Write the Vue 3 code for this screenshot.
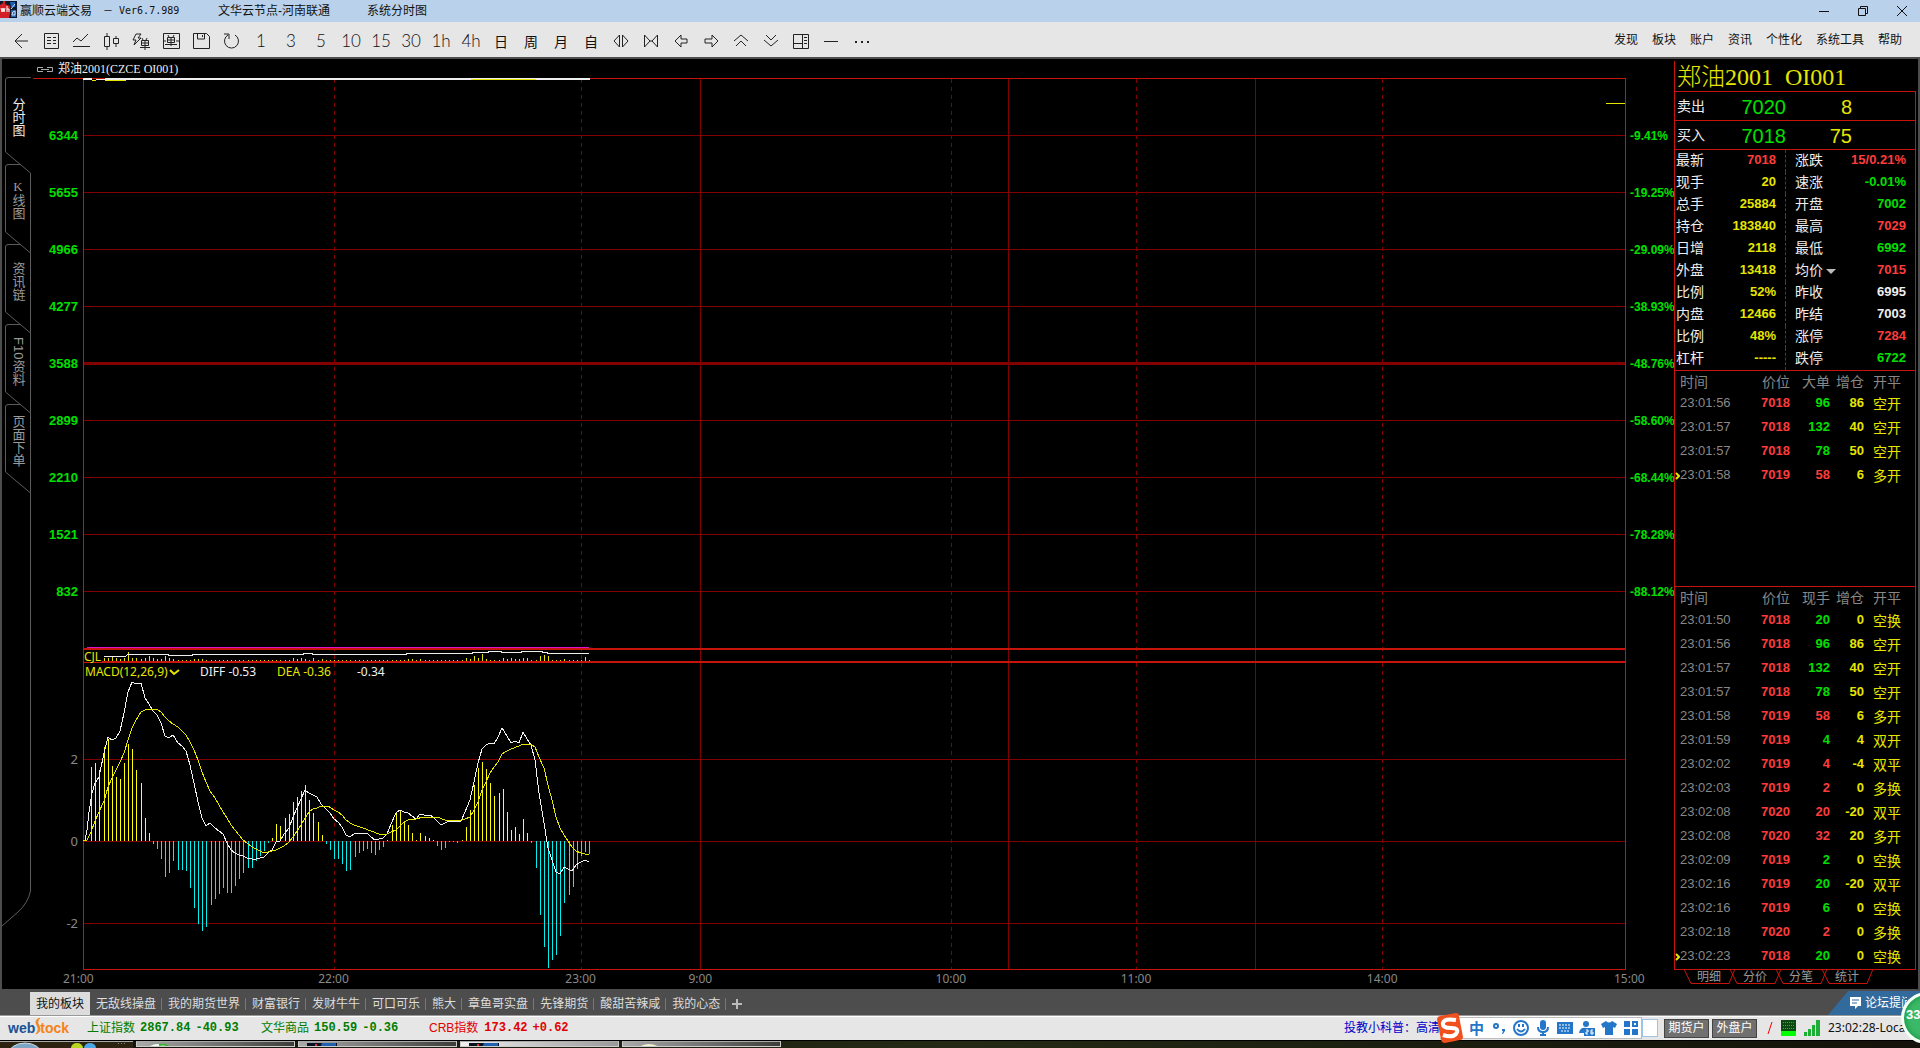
<script setup>
const periods = ['1', '3', '5', '10', '15', '30', '1h', '4h', '日', '周', '月', '自']
const menus = ['发现', '板块', '账户', '资讯', '个性化', '系统工具', '帮助']
const sideTabs = [
  { text: '分时图', active: true },
  { text: 'K线图', upright: true },
  { text: '资讯链' },
  { text: 'F10资料' },
  { text: '页面下单' }
]
const priceLabels = [6344, 5655, 4966, 4277, 3588, 2899, 2210, 1521, 832]
const pctLabels = ['-9.41%', '-19.25%', '-29.09%', '-38.93%', '-48.76%', '-58.60%', '-68.44%', '-78.28%', '-88.12%']
const times = ['21:00', '22:00', '23:00', '9:00', '10:00', '11:00', '14:00', '15:00']

const hLines = [57, 114, 171, 228, 342, 399, 456, 513, 681, 763, 845]
const solidTimes = [617, 925, 1172]
const dashedTimes = [251, 498, 868, 1053, 1299]

// MACD histogram, one value per minute, in chart pixels from the zero line
const macd = [
  74, 78, 71, 94, 102, 75, 64, 62, 78, 97, 92, 71, 58, 23, 8, -3, -8, -18, -36, -32, -20, -29, -29, -30, -47, -67,
  -83, -90, -86, -64, -58, -53, -47, -52, -52, -45, -38, -32, -27, -27, -20, -15, -10, -2, 3, 17, 15, 23, 27, 39,
  44, 50, 56, 41, 28, 19, 6, -3, -9, -18, -18, -23, -30, -29, -16, -12, -10, -8, -12, -14, -9, -6, 1, 16, 29, 31,
  20, 16, 8, 1, 8, 5, 3, 1, -5, -9, -7, -1, -1, -2, 1, 14, 31, 56, 73, 79, 72, 58, 45, 48, 52, 29, 11, 14, 7, 22,
  8, -2, -27, -74, -106, -127, -119, -114, -95, -62, -54, -46, -28, -15, -11, -13
]
const barX = k => 8 + Math.floor(k * 4.115 + 0.69)
const bars = macd.map((v, k) => ({ x: barX(k), y: v > 0 ? 763 - v : 763, h: Math.abs(v), up: v > 0 }))

const tall = { 3: 3, 4: 3, 5: 4, 6: 3, 7: 2, 8: 3, 9: 9, 10: 3, 11: 3, 12: 2, 13: 3, 14: 5, 15: 3, 16: 2, 17: 2, 18: 5, 19: 3, 20: 2, 25: 2, 26: 2, 27: 2, 49: 3, 50: 2, 51: 3, 52: 2, 54: 3, 56: 2, 77: 2, 78: 2, 80: 2, 91: 3, 92: 2, 93: 5, 94: 3, 95: 7, 96: 2, 100: 3, 101: 2, 102: 3, 103: 2, 104: 2, 105: 3, 106: 3, 109: 5, 110: 6, 111: 5, 115: 2, 120: 4 }
const volumes = macd.map((_, k) => ({ x: barX(k), h: tall[k] || 1 })).slice(3)

// Indicator samples are kept at three units per pixel
const scale = pts => pts.map(([x, y]) => `${Math.round(x / 3) - 23},${Math.round(y / 3) + 552}`).join(' ')
const diff = scale([
  [70, 634], [76, 630], [82, 600], [88, 545], [95, 490], [106, 460], [118, 440], [133, 370], [145, 320], [157, 331],
  [169, 325], [181, 303], [193, 250], [205, 185], [217, 157], [229, 162], [244, 160], [256, 205], [268, 223],
  [280, 243], [292, 254], [304, 280], [316, 318], [328, 325], [340, 314], [355, 338], [367, 348], [379, 363],
  [391, 405], [403, 460], [415, 515], [427, 565], [439, 589], [451, 580], [466, 595], [478, 603], [490, 613],
  [502, 640], [514, 660], [526, 669], [538, 676], [550, 677], [562, 683], [577, 688], [589, 688], [601, 684],
  [613, 681], [625, 669], [637, 661], [649, 635], [661, 632], [673, 613], [688, 595], [700, 562], [712, 535],
  [724, 508], [736, 481], [748, 488], [760, 496], [772, 502], [784, 521], [799, 537], [811, 549], [823, 568],
  [835, 576], [847, 592], [859, 615], [871, 622], [883, 611], [922, 610], [934, 620], [946, 630], [958, 626],
  [970, 625], [982, 612], [994, 581], [1009, 550], [1021, 540], [1033, 547], [1045, 548], [1057, 557], [1069, 566],
  [1081, 553], [1093, 556], [1111, 556], [1120, 560], [1132, 572], [1144, 584], [1156, 580], [1168, 573],
  [1180, 574], [1192, 577], [1204, 572], [1216, 545], [1231, 510], [1243, 455], [1255, 400], [1267, 358],
  [1279, 344], [1291, 340], [1303, 343], [1315, 320], [1327, 295], [1342, 318], [1354, 340], [1366, 332],
  [1378, 340], [1390, 307], [1402, 328], [1414, 345], [1426, 390], [1438, 490], [1453, 580], [1465, 655],
  [1477, 690], [1489, 725], [1501, 732], [1513, 711], [1525, 716], [1537, 722], [1549, 706], [1564, 695],
  [1576, 691], [1586, 697]
])
const dea = scale([
  [70, 634], [82, 630], [94, 605], [106, 572], [118, 545], [133, 512], [145, 470], [157, 445], [169, 420],
  [181, 397], [193, 370], [205, 330], [217, 295], [229, 270], [244, 247], [256, 240], [268, 238], [292, 238],
  [304, 246], [316, 262], [328, 273], [340, 283], [355, 291], [367, 303], [379, 315], [391, 335], [403, 360],
  [415, 390], [427, 425], [439, 457], [451, 484], [466, 505], [478, 525], [490, 545], [502, 563], [514, 584],
  [526, 600], [538, 616], [550, 630], [562, 638], [577, 650], [589, 657], [601, 664], [613, 668], [625, 667],
  [637, 664], [649, 660], [661, 653], [673, 647], [688, 637], [700, 620], [712, 603], [724, 585], [736, 564],
  [748, 547], [760, 538], [772, 533], [784, 529], [805, 529], [823, 540], [835, 547], [847, 554], [859, 569],
  [871, 580], [883, 586], [910, 595], [934, 602], [958, 613], [982, 613], [994, 606], [1009, 600], [1021, 588],
  [1033, 577], [1045, 570], [1069, 568], [1090, 562], [1132, 562], [1156, 571], [1204, 571], [1216, 568],
  [1231, 560], [1243, 540], [1255, 515], [1267, 480], [1279, 455], [1291, 428], [1303, 412], [1315, 395],
  [1327, 373], [1342, 364], [1354, 356], [1378, 349], [1390, 343], [1414, 341], [1426, 350], [1438, 380],
  [1453, 415], [1465, 465], [1477, 510], [1489, 560], [1501, 593], [1513, 615], [1525, 632], [1537, 650],
  [1549, 663], [1564, 670], [1586, 676]
])

const stats = [
  ['最新', '7018', 'r', '涨跌', '15/0.21%', 'r'],
  ['现手', '20', 'y', '速涨', '-0.01%', 'g'],
  ['总手', '25884', 'y', '开盘', '7002', 'g'],
  ['持仓', '183840', 'y', '最高', '7029', 'r'],
  ['日增', '2118', 'y', '最低', '6992', 'g'],
  ['外盘', '13418', 'y', '均价', '7015', 'r'],
  ['比例', '52%', 'y', '昨收', '6995', 'w'],
  ['内盘', '12466', 'y', '昨结', '7003', 'w'],
  ['比例', '48%', 'y', '涨停', '7284', 'r'],
  ['杠杆', '-----', 'y', '跌停', '6722', 'g']
]
const bigTrades = [
  ['23:01:56', '7018', '96', 'g', '86', '空开'],
  ['23:01:57', '7018', '132', 'g', '40', '空开'],
  ['23:01:57', '7018', '78', 'g', '50', '空开'],
  ['23:01:58', '7019', '58', 'r', '6', '多开']
]
const trades = [
  ['23:01:50', '7018', '20', 'g', '0', '空换'],
  ['23:01:56', '7018', '96', 'g', '86', '空开'],
  ['23:01:57', '7018', '132', 'g', '40', '空开'],
  ['23:01:57', '7018', '78', 'g', '50', '空开'],
  ['23:01:58', '7019', '58', 'r', '6', '多开'],
  ['23:01:59', '7019', '4', 'g', '4', '双开'],
  ['23:02:02', '7019', '4', 'r', '-4', '双平'],
  ['23:02:03', '7019', '2', 'r', '0', '多换'],
  ['23:02:08', '7020', '20', 'r', '-20', '双平'],
  ['23:02:08', '7020', '32', 'r', '20', '多开'],
  ['23:02:09', '7019', '2', 'g', '0', '空换'],
  ['23:02:16', '7019', '20', 'g', '-20', '双平'],
  ['23:02:16', '7019', '6', 'g', '0', '空换'],
  ['23:02:18', '7020', '2', 'r', '0', '多换'],
  ['23:02:23', '7018', '20', 'g', '0', '空换']
]
const tapes = [
  { volume: '大单', rows: bigTrades, tall: true },
  { volume: '现手', rows: trades, tall: false }
]
const detailTabs = ['明细', '分价', '分笔', '统计']
const boards = ['我的板块', '无敌线操盘', '我的期货世界', '财富银行', '发财牛牛', '可口可乐', '熊大', '章鱼哥实盘', '先锋期货', '酸甜苦辣咸', '我的心态']
</script>

<template>
  <div class="app">
    <header class="title">
      <svg class="logo" width="17" height="17" viewBox="0 0 17 17">
        <rect width="17" height="17" fill="#101828" />
        <path d="M0 4L3 2V0H5V3L10 5V12L9 17H0Z" fill="#d21e24" />
        <path d="M10 1h5v5h-4zM11 9h5v7h-5z" fill="#1c5fb4" />
        <path d="M1 7l1 4 1-4 1 4 1-4M7 5v6M7 8h2v3" fill="none" stroke="#fff" />
        <path d="M11 8l4-5M12 14q0-4 3-4v4z" fill="none" stroke="#cfe4ff" />
      </svg>
      <span class="name">赢顺云端交易</span>
      <span class="ver">－ Ver6.7.989</span>
      <span class="node">文华云节点-河南联通</span>
      <span>系统分时图</span>
      <div class="win">
        <button aria-label="最小化"><svg width="12" height="12"><path d="M1 6.5h10" /></svg></button>
        <button aria-label="还原"><svg width="12" height="12"><path d="M1.500 3.500h7v7h-7zM3.500 3V1.500h7v7H9" /></svg></button>
        <button aria-label="关闭"><svg width="12" height="12"><path d="M1 1l10 10M11 1L1 11" /></svg></button>
      </div>
    </header>

    <nav class="tools">
      <button aria-label="返回"><svg viewBox="0 0 18 18"><path d="M10 2L3 9l7 7M3 9h13" /></svg></button>
      <button aria-label="报价"><svg viewBox="0 0 18 18"><path d="M2.500 1.500h14v15h-14zM5 5.500h4M11 5.500h3M5 8.500h4M11 8.500h3M5 11.500h4M11 11.500h3" /></svg></button>
      <button aria-label="分时"><svg viewBox="0 0 18 18"><path d="M1 10l4-4 4 3 7-7M1 14.500h17" /></svg></button>
      <button aria-label="K线"><svg viewBox="0 0 18 18"><path d="M2.500 4.500h5v10h-5zM5 1v3M5 14v4M11.500 6.500h5v5h-5zM14 4v2M14 12v3" /></svg></button>
      <button aria-label="闪电下单"><svg viewBox="0 0 18 18"><path d="M4 2h5L6 6h3L2 13l2-5H1zM10 6l1 2M15 6l-1 2M9.500 8.500h7v5h-7zM9 11h8M13 8v10M8 15.500h10" /></svg></button>
      <button aria-label="下单"><svg viewBox="0 0 18 18"><path d="M1.500 1.500h16v15h-16zM6 3l1 2M12 3l-1 2M5.500 5.500h7v5h-7zM5 8h8M9 5v9M3 12.500h12M2 9h2M14 9h3" /></svg></button>
      <button aria-label="保存"><svg viewBox="0 0 18 18"><path d="M1.500 1.500h13l3 3v12h-16zM5.500 2v5h7V2M10.500 3v2" /></svg></button>
      <button aria-label="刷新"><svg viewBox="0 0 18 18"><path d="M6 3a7 7 0 1 0 7 0M2 2h5v5" /></svg></button>
      <button v-for="p in periods" :key="p" :class="{ han: p > 'z' }">{{ p }}</button>
      <button aria-label="放大"><svg viewBox="0 0 18 18"><path d="M7.500 3v12L2 9zM10.500 3v12L16 9z" /></svg></button>
      <button aria-label="缩小"><svg viewBox="0 0 18 18"><path d="M2.500 3v12L8 9zM15.500 3v12L10 9zM8 9h2" /></svg></button>
      <button aria-label="左移"><svg viewBox="0 0 18 18"><path d="M3 9l6-6v4h6v4H9v4z" /></svg></button>
      <button aria-label="右移"><svg viewBox="0 0 18 18"><path d="M16 9l-6-6v4H3v4h7v4z" /></svg></button>
      <button aria-label="上翻"><svg viewBox="0 0 18 18"><path d="M2 9l7-6 7 6M4 14l5-5 5 5" /></svg></button>
      <button aria-label="下翻"><svg viewBox="0 0 18 18"><path d="M4 3l5 5 5-5M2 8l7 6 7-6" /></svg></button>
      <button aria-label="布局"><svg viewBox="0 0 18 18"><path d="M1.500 2.500h15v14h-15zM10.500 2v14M2 11.500h8M12 5.500h3M12 8.500h3M12 11.500h3" /></svg></button>
      <button aria-label="画线"><svg viewBox="0 0 18 18"><path d="M2 9.500h14" /></svg></button>
      <button aria-label="更多"><svg viewBox="0 0 18 18"><path stroke-width="2" d="M3 10h2M9 10h2M15 10h2" /></svg></button>
      <div class="menus"><a v-for="m in menus" :key="m" href="#">{{ m }}</a></div>
    </nav>

    <main class="main">
      <aside class="side">
        <svg class="side-bg" width="29" height="872" viewBox="0 0 29 872">
          <path d="M29 .5H6Q3.500 .5 3.500 3V75L28.500 96V814Q26 826 16 835L0 849" />
          <path v-for="i in 4" :key="i" :d="`M18 ${i * 80 + 7.5}H6Q3.500 ${i * 80 + 7.5} 3.500 ${i * 80 + 10}V${i * 80 + 75}L28.500 ${i * 80 + 96}`" />
        </svg>
        <button v-for="t in sideTabs" :key="t.text" :class="{ active: t.active, upright: t.upright }">{{ t.text }}</button>
      </aside>

      <section class="chart">
        <h1>
          <svg width="16" height="7" viewBox="0 0 16 7"><path d="M6 1.500H.5v4H6M10 1.500h5.500v4H10M4 3.500h8" /></svg>
          <span>郑油2001(CZCE OI001)</span>
        </h1>
        <div class="body">
          <div class="scale left">
            <span v-for="p in priceLabels" :key="p">{{ p }}</span>
            <span v-for="m in ['2', '0', '-2']" :key="m" class="osc">{{ m }}</span>
          </div>
          <div class="plot">
            <svg viewBox="0 0 1543 892" preserveAspectRatio="none" shape-rendering="crispEdges">
              <g fill="#820000">
                <rect v-for="y in hLines" :key="y" x="0" :y="y" width="1542" height="1" />
                <rect x="0" y="284" width="1542" height="3" />
                <rect v-for="x in solidTimes" :key="x" :x="x" y="0" width="1" height="891" />
              </g>
              <path v-for="x in dashedTimes" :key="x" :d="`M${x}.5 1V891`" stroke="#820000" stroke-dasharray="4 4" />
              <g fill="#c8140a">
                <rect x="0" y="0" width="1543" height="1" />
                <rect x="0" y="891" width="1543" height="1" />
                <rect x="0" y="0" width="1" height="892" />
                <rect x="1542" y="0" width="1" height="892" />
                <rect x="0" y="570" width="1543" height="2" />
                <rect x="0" y="583" width="1543" height="2" />
              </g>
              <g fill="#eee">
                <rect x="0" y="0" width="9" height="2" />
                <rect x="13" y="1" width="9" height="1" />
                <rect x="22" y="0" width="485" height="2" />
              </g>
              <g fill="#e6e600">
                <rect x="9" y="2" width="4" height="1" />
                <rect x="22" y="2" width="21" height="1" />
                <rect x="388" y="1" width="65" height="1" />
                <rect x="1523" y="25" width="19" height="1" />
              </g>
              <rect x="4" y="569" width="502" height="1" fill="#e010d0" />
              <rect v-for="v in volumes" :key="v.x" :x="v.x" :y="583 - v.h" width="1" :height="v.h" fill="#e6e600" />
              <path d="M21 578.5H42L45 576.5H85V577.5H109V576.5H220V575.500H229V576.500H323V575.500H389V574.500H405V573.500H418V574.500H438V573.500H459V574.500H464V575.500H506" class="line" stroke="#eee" />
              <rect v-for="b in bars" :key="b.x" :x="b.x" :y="b.y" width="1" :height="b.h" :fill="b.up ? '#ffff00' : '#00f0f0'" />
              <polyline :points="diff" class="line" stroke="#f0f0f0" />
              <polyline :points="dea" class="line" stroke="#e6e600" />
            </svg>
            <span class="cjl">CJL</span>
            <div class="legend">
              <span class="y">MACD(12,26,9)<svg width="11" height="7" viewBox="0 0 11 7"><path d="M1 1l4 4 5-4" /></svg></span>
              <span class="w">DIFF -0.53</span>
              <span class="y">DEA -0.36</span>
              <span class="w">-0.34</span>
            </div>
          </div>
          <div class="scale right"><span v-for="p in pctLabels" :key="p">{{ p }}</span></div>
        </div>
        <div class="axis"><span v-for="t in times" :key="t">{{ t }}</span></div>
      </section>

      <section class="quote">
        <h2>郑油2001&nbsp; OI001</h2>
        <div class="box">
          <div class="level"><span>卖出</span><b class="g">7020</b><b class="y">8</b></div>
          <div class="level"><span>买入</span><b class="g">7018</b><b class="y">75</b></div>
          <table class="stats">
            <tbody>
              <tr v-for="(s, i) in stats" :key="i">
                <th>{{ s[0] }}</th>
                <td :class="s[2]">{{ s[1] }}</td>
                <th class="second">{{ s[3] }}<i v-if="s[3] === '均价'" class="caret"></i></th>
                <td :class="s[5]">{{ s[4] }}</td>
              </tr>
            </tbody>
          </table>
          <div v-for="t in tapes" :key="t.volume" class="tape" :class="{ tall: t.tall }">
            <table>
              <thead>
                <tr><th>时间</th><th>价位</th><th>{{ t.volume }}</th><th>增仓</th><th>开平</th></tr>
              </thead>
              <tbody>
                <tr v-for="(r, i) in t.rows" :key="i">
                  <td><svg v-if="i === t.rows.length - 1" class="mark" width="5" height="8" viewBox="0 0 5 8"><path d="M1 1l3 3-3 3" /></svg>{{ r[0] }}</td>
                  <td class="r">{{ r[1] }}</td>
                  <td :class="r[3]">{{ r[2] }}</td>
                  <td class="y">{{ r[4] }}</td>
                  <td class="y">{{ r[5] }}</td>
                </tr>
              </tbody>
            </table>
          </div>
        </div>
        <div class="detail">
          <button v-for="d in detailTabs" :key="d">
            <svg width="52" height="16" viewBox="0 0 52 16"><path d="M1 0L8 14.500H46L52 0" /></svg>
            <span>{{ d }}</span>
          </button>
        </div>
      </section>
    </main>

    <nav class="boards">
      <button v-for="(b, i) in boards" :key="b" :class="{ active: i === 0 }">{{ b }}</button>
      <button aria-label="添加" class="add"><svg width="10" height="10"><path d="M5 0v10M0 5h10" /></svg></button>
      <a href="#" class="forum">
        <svg width="11" height="12" viewBox="0 0 11 12"><path d="M0 0h11v9H8l-3 3V9H0z" fill="#fff" /><path d="M2 3h7M2 6h5" stroke="#336a9c" /></svg>
        <span>论坛提问</span>
      </a>
      <div class="ball">33</div>
    </nav>

    <footer class="status">
      <div class="web"><b>web</b><svg width="8" height="17" viewBox="0 0 8 17"><path d="M6 0Q0 2 3 7T2 16Q8 13 5 8T6 0" fill="#f58220" stroke="#f58220" /></svg><b class="stock">tock</b></div>
      <div class="idx down"><span>上证指数</span><b>2867.84</b><b>-40.93</b></div>
      <div class="idx down"><span>文华商品</span><b>150.59</b><b>-0.36</b></div>
      <div class="idx up"><span>CRB指数</span><b>173.42</b><b>+0.62</b></div>
      <div class="tray">
        <a href="#" class="news">投教小科普：高清</a>
        <div class="ime">
          <svg class="sogou" width="28" height="30" viewBox="0 0 28 30">
            <path d="M1 6Q1 4 4 3L20 0Q23 0 23 3L27 24Q27 27 24 27L9 30Q6 30 5 27Z" fill="#f0501e" />
            <path d="M20 7Q8 5 7 10T15 15T20 21Q16 25 7 22" fill="none" stroke="#fff" stroke-width="4" />
          </svg>
          <b>中</b>
          <svg viewBox="0 0 16 16"><circle cx="5" cy="6" r="2" class="o" /><path d="M11 9h3v2l-2 3h-1l1-3h-1z" /></svg>
          <svg viewBox="0 0 16 16"><circle cx="8" cy="8" r="7" class="o" /><path d="M5 4h2v3H5zM9 4h2v3H9z" /><path d="M4 9q4 5 8 0" class="o" /></svg>
          <svg viewBox="0 0 16 16"><rect x="5" y="0" width="6" height="10" rx="3" /><path d="M3 7q0 5 5 5t5-5M8 12v3M5 15h6" class="o" /></svg>
          <svg viewBox="0 0 16 16"><path d="M0 2h16v12H0z" /><path d="M2 5h12M2 8h12M4 11h8" stroke="#fff" stroke-dasharray="2 1" /></svg>
          <svg viewBox="0 0 16 16"><circle cx="7" cy="4" r="3" /><path d="M0 13q1-6 7-5l3 1v4z" /><rect x="5" y="8" width="11" height="8" /><path d="M7 10h2v2H7v2h2M14 10h-2v4h2v-2h-2" stroke="#fff" fill="none" /></svg>
          <svg viewBox="0 0 16 16"><path d="M5 1q3 3 6 0l5 3-2 4-2-1v8H4V7L2 8 0 4z" /></svg>
          <svg viewBox="0 0 16 16"><path d="M1 1h6v6H1zM1 9h6v6H1zM9 9h6v6H9z" /><path d="M10 2h4v4h-4z" class="o" /></svg>
        </div>
        <input aria-label="代码" />
        <button>期货户</button>
        <button>外盘户</button>
        <svg class="slash" width="6" height="12"><path d="M1 12L5 0" /></svg>
        <svg class="grid" width="15" height="16"><rect width="15" height="16" fill="#0a4a10" /><rect y="11" width="15" height="5" fill="#0f0" /><path d="M2 2.500h12M2 5.500h12M2 8.500h12" stroke="#19c02a" stroke-dasharray="1 1" /></svg>
        <svg class="signal" width="16" height="16" fill="#1fae35"><rect y="12" width="3" height="4" /><rect x="4" y="9" width="3" height="7" /><rect x="8" y="5" width="3" height="11" /><rect x="12" width="4" height="16" /></svg>
        <span class="clock">23:02:28-Loca</span>
      </div>
    </footer>

    <div class="taskbar">
      <div class="start">
        <svg width="130" height="6" viewBox="0 0 130 6"><ellipse cx="25" cy="13" rx="17" ry="12" fill="#7ea6c4" stroke="#cfe0ea" /><ellipse cx="77" cy="6" rx="6" ry="5" fill="#b8d820" /><ellipse cx="90" cy="6" rx="6" ry="5" fill="#4aa8e8" /><path d="M118 1.500h8" stroke="#888" stroke-dasharray="1 2" /></svg>
      </div>
      <div class="task"><svg width="30" height="6"><ellipse cx="14" cy="7" rx="11" ry="5" fill="#f4fff4" /><path d="M14 3q8-2 10 3" stroke="#40b030" fill="none" stroke-width="2" /></svg></div>
      <div class="task"><svg width="30" height="6"><path d="M0 1h30v5H0z" fill="#061020" /><path d="M15 1h14v5H13z" fill="#2060b0" /><path d="M9 2v4" stroke="#e03030" stroke-width="2" /></svg></div>
      <div class="task on"><svg width="30" height="6"><path d="M0 1h30v5H0z" fill="#061020" /><path d="M15 1h14v5H13z" fill="#2060b0" /><path d="M9 2v4" stroke="#e03030" stroke-width="2" /></svg></div>
      <div class="task"><svg width="36" height="6"><ellipse cx="18" cy="8" rx="11" ry="6" fill="#f6f3d0" /></svg></div>
    </div>
  </div>
</template>

<style>
body { margin: 0; background: #000; }
</style>

<style scoped>
.app {
  display: flex; flex-direction: column; min-height: 100vh; overflow: hidden;
  font: 12px/14px "Liberation Sans", "Noto Sans CJK SC", sans-serif; color: #eee; background: #000;
}
button { border: 0; padding: 0; background: none; font: inherit; color: inherit; }
a { color: inherit; text-decoration: none; }
svg { display: block; flex: none; }
.r { color: #ff3c3c; }
.g { color: #00e000; }
.y { color: #e6e600; }
.w { color: #f0f0f0; }

.title { display: flex; align-items: center; height: 22px; background: #b9d1ea; color: #111; }
.logo { margin-bottom: 4px; }
.title span { white-space: nowrap; }
.title .name { margin: 0 11px 0 3px; }
.title .ver { font: 10px/14px "DejaVu Sans Mono", "Noto Sans CJK SC", monospace; width: 115px; }
.title .node { width: 149px; }
.win { display: flex; margin-left: auto; padding-right: 12px; gap: 27px; }
.win svg { fill: none; stroke: #111; }

.tools { display: flex; align-items: center; height: 35px; padding: 3px 18px 0 6px; box-sizing: border-box; background: #e6e6e6; color: #111; }
.tools > button { display: flex; justify-content: center; width: 30px; flex: none; font: 300 17px/20px Lato, sans-serif; }
.tools > button.han { font: 14px/18px "Noto Sans CJK SC", sans-serif; }
.tools > button svg { width: 18px; height: 18px; fill: none; stroke: #222; }
.menus { display: flex; gap: 14px; margin: 0 0 2px auto; white-space: nowrap; }

.main { display: flex; flex: 1; border: solid #4d4d4d; border-width: 2px 2px 0; padding-right: 2px; }
.side { position: relative; display: flex; flex-direction: column; width: 29px; flex: none; padding-top: 18px; font-size: 13px; line-height: 14px; color: #999; }
.side-bg { position: absolute; left: 0; top: 18px; fill: none; stroke: #5c5c5c; }
.side button { position: relative; writing-mode: vertical-rl; height: 80px; width: 29px; padding: 0 0 8px 2px; text-align: center; line-height: 26px; }
.side button.active { height: 88px; color: #eee; padding-bottom: 8px; }
.side button.upright { text-orientation: upright; padding-bottom: 12px; font-family: "Liberation Serif", "Noto Sans CJK SC", serif; }

.chart { flex: 1; min-width: 0; }
h1 { display: flex; align-items: center; gap: 5px; height: 19px; box-sizing: border-box; margin: 0; padding: 2px 0 0 6px; font: 12px/17px "Liberation Serif", "Noto Sans CJK SC", serif; }
h1 svg { fill: none; stroke: #aaa; }
.body { display: grid; grid-template-columns: 52px 1fr 48px; height: 892px; }
.scale { display: flex; flex-direction: column; padding-top: 29px; font-weight: bold; color: #00e000; }
.scale span { height: 57px; line-height: 57px; }
.scale.left { text-align: right; padding-right: 5px; font-size: 13px; border-top: 1px solid #c8140a; margin: 0 0 0 2px; padding-top: 28px; }
.scale.right { padding: 30px 0 0 4px; white-space: nowrap; }
.scale .osc { height: 82px; line-height: 82px; font: 13px/82px "Noto Sans", sans-serif; color: #888; }
.scale .osc:nth-child(10) { margin-top: 98px; }
.plot { position: relative; min-width: 0; }
.plot > svg { width: 100%; height: 892px; }
.line { fill: none; }
.cjl { position: absolute; left: 1px; top: 573px; line-height: 11px; padding-right: 1px; background: #000; color: #e6e600; font-family: "Noto Sans", sans-serif; }
.legend { position: absolute; left: 2px; top: 586px; display: flex; font: 12px/16px "Noto Sans", sans-serif; }
.legend span { display: flex; align-items: center; gap: 1px; width: 77px; }
.legend span:first-child { width: 115px; }
.legend span:nth-child(3) { width: 80px; }
.legend svg { fill: none; stroke: #e6e600; stroke-width: 2; }
.axis { display: grid; grid-template-columns: 251fr 247fr 119fr 251fr 185fr 246fr 243fr 0; margin: 0 48px 0 52px; font: 12px/18px "Noto Sans", sans-serif; color: #888; white-space: nowrap; }
.axis span { margin-left: -16px; }
.axis span:first-child { margin-left: -20px; }
.axis span:nth-child(4), .axis span:last-child { margin-left: -12px; }

.quote { width: 242px; flex: none; padding-top: 2px; box-sizing: border-box; }
h2 { height: 30px; margin: 0; padding-left: 2px; border-left: 1px solid #c8140a; font: 300 24px/32px "Liberation Serif", "Noto Sans CJK SC", serif; color: #e6e600; white-space: nowrap; }
.box { border: 1px solid #c8140a; height: 877px; }
.level { display: grid; grid-template-columns: 28px 81px 66px; padding-left: 2px; height: 28px; line-height: 28px; border-bottom: 1px solid #c8140a; text-align: right; }
.level span { font-size: 14px; text-align: left; }
.level b { font-weight: normal; font-size: 20px; line-height: 30px; }
table { border-collapse: collapse; table-layout: fixed; }
th, td { padding: 0; white-space: nowrap; font-size: 14px; font-weight: normal; }
.stats { width: 100%; height: 220px; }
.stats tr { height: 22px; }
.stats th { width: 30px; padding-left: 1px; text-align: left; line-height: 20px; padding-bottom: 2px; }
.stats td { width: 69px; text-align: right; padding-bottom: 2px; font: bold 13px/20px "Liberation Sans", sans-serif; }
.stats td:last-child { padding-right: 9px; width: 67px; }
.stats td:nth-child(2) { padding-right: 9px; border-right: 1px dashed #b01010; width: 70px; }
.stats th.second { padding-left: 9px; width: 44px; }
.caret { display: inline-block; vertical-align: middle; margin-left: 3px; border: 5px solid transparent; border-top-color: #bbb; border-bottom: 0; }
.tape { border-top: 1px solid #c8140a; }
.tape.tall { height: 215px; }
.tape table { width: 221px; margin-left: 5px; }
.tape th { height: 23px; line-height: 23px; color: #888; text-align: right; }
.tape thead tr { height: 23px; }
.tape.tall th { height: 22px; line-height: 22px; }
.tape.tall thead tr { height: 22px; }
.tape tbody tr { height: 24px; }
.tape th:first-child { text-align: left; width: 60px; }
.tape th:nth-child(2) { width: 50px; }
.tape th:nth-child(3) { width: 40px; }
.tape th:nth-child(4) { width: 34px; }
.tape th:nth-child(5) { width: 37px; }
.tape td { text-align: right; font: bold 13px/20px "Liberation Sans", sans-serif; padding-bottom: 4px; }
.tape td:first-child { position: relative; text-align: left; font-weight: normal; font-size: 13px; color: #888; }
.tape td:last-child { font: 14px/20px "Noto Sans CJK SC", sans-serif; }
.mark { position: absolute; left: -5px; top: 7px; fill: none; stroke: #e6e600; stroke-width: 2; }
.detail { display: flex; padding-left: 9px; height: 18px; color: #999; }
.detail button { position: relative; width: 46px; height: 16px; margin-top: -1px; }
.detail svg { position: absolute; left: 0; top: 0; fill: none; stroke: #c8140a; }
.detail button span { position: relative; left: 3px; line-height: 15px; }

.boards { position: relative; display: flex; align-items: flex-end; height: 26px; padding-left: 30px; background: #4d4d4d; color: #ddd; }
.boards button { height: 23px; padding: 0 6px; white-space: nowrap; position: relative; }
.boards button:not(.active):not(.add)::after { content: ""; position: absolute; right: 0; top: 6px; width: 1px; height: 12px; background: #777; }
.boards button.active { background: #dcdcdc; color: #111; }
.add svg { stroke: #bbb; stroke-width: 2; }
.forum { display: flex; align-items: center; gap: 4px; width: 70px; height: 24px; margin-left: auto; padding-left: 22px; background: #336a9c; clip-path: polygon(20px 0, 100% 0, 100% 100%, 0 100%); color: #fff; white-space: nowrap; overflow: hidden; }
.forum span { width: 42px; overflow: hidden; }
.ball { position: absolute; right: -33px; top: 3px; z-index: 2; width: 46px; height: 46px; border: 3px solid #f2fff2; border-radius: 50%; background: #3cb968; color: #fff; font: bold 13px/40px "Liberation Sans", sans-serif; text-indent: 2px; box-shadow: inset 0 0 6px #0c8a3c; }

.status { display: flex; align-items: center; height: 25px; box-sizing: border-box; border-top: 1px solid #999; background: #e6e6e6; box-shadow: inset 0 1px #fff; white-space: nowrap; }
.web { display: flex; align-items: center; width: 79px; padding-left: 8px; color: #1b5296; font: 14px/20px "Liberation Sans", sans-serif; }
.web svg { margin: 0 -2px 4px -1px; }
.web .stock { color: #f58220; }
.idx { display: flex; gap: 5px; width: 174px; color: #007d00; }
.idx:nth-child(3) { width: 168px; }
.idx b { font: bold 12px/14px "Liberation Mono", monospace; }
.idx.up { color: #e00000; }
.idx.up span { margin-right: 1px; }
.tray { display: flex; align-items: center; width: 576px; height: 23px; margin-left: auto; color: #111; }
.news { width: 96px; color: #0000c8; overflow: hidden; }
.ime { position: relative; display: flex; align-items: center; gap: 6px; width: 202px; height: 22px; padding-left: 29px; box-sizing: border-box; background: #fff; border: 1px solid #bbb; border-left: 0; }
.ime > svg:not(.sogou) { width: 16px; height: 16px; fill: #2476c8; }
.ime .o { fill: none; stroke: #2476c8; stroke-width: 2; }
.ime b { color: #2476c8; font: bold 15px/20px "Noto Sans CJK SC", sans-serif; width: 16px; }
.sogou { position: absolute; left: -4px; top: -5px; }
.tray input { width: 16px; height: 18px; box-sizing: border-box; border: 1px solid #9cc4e4; background: #fff; margin-right: 6px; padding: 0; }
.tray button { width: 45px; height: 19px; margin-right: 3px; box-sizing: border-box; border: 1px solid #444; background: #707070; color: #fff; }
.slash { margin: 0 8px 0 7px; fill: none; stroke: #f00; }
.grid { margin-right: 8px; }
.signal { margin-right: 8px; }
.clock { font: 12px/16px "Noto Sans", sans-serif; }

.taskbar { display: flex; height: 8px; box-sizing: border-box; gap: 3px; border-top: 1px solid #000; background: linear-gradient(90deg, #14120a, #222a14 50%, #14120a); overflow: hidden; }
.taskbar > div { border-top: 1px solid #aaa; height: 6px; overflow: hidden; }
.start { width: 133px; background: #2c2210; }
.task { width: 159px; border: 1px solid #ccc; background: linear-gradient(90deg, #aaa, #3c3c38); padding-left: 8px; box-sizing: border-box; }
.task.on { background: linear-gradient(90deg, #f0f0f0, #999); }
</style>
